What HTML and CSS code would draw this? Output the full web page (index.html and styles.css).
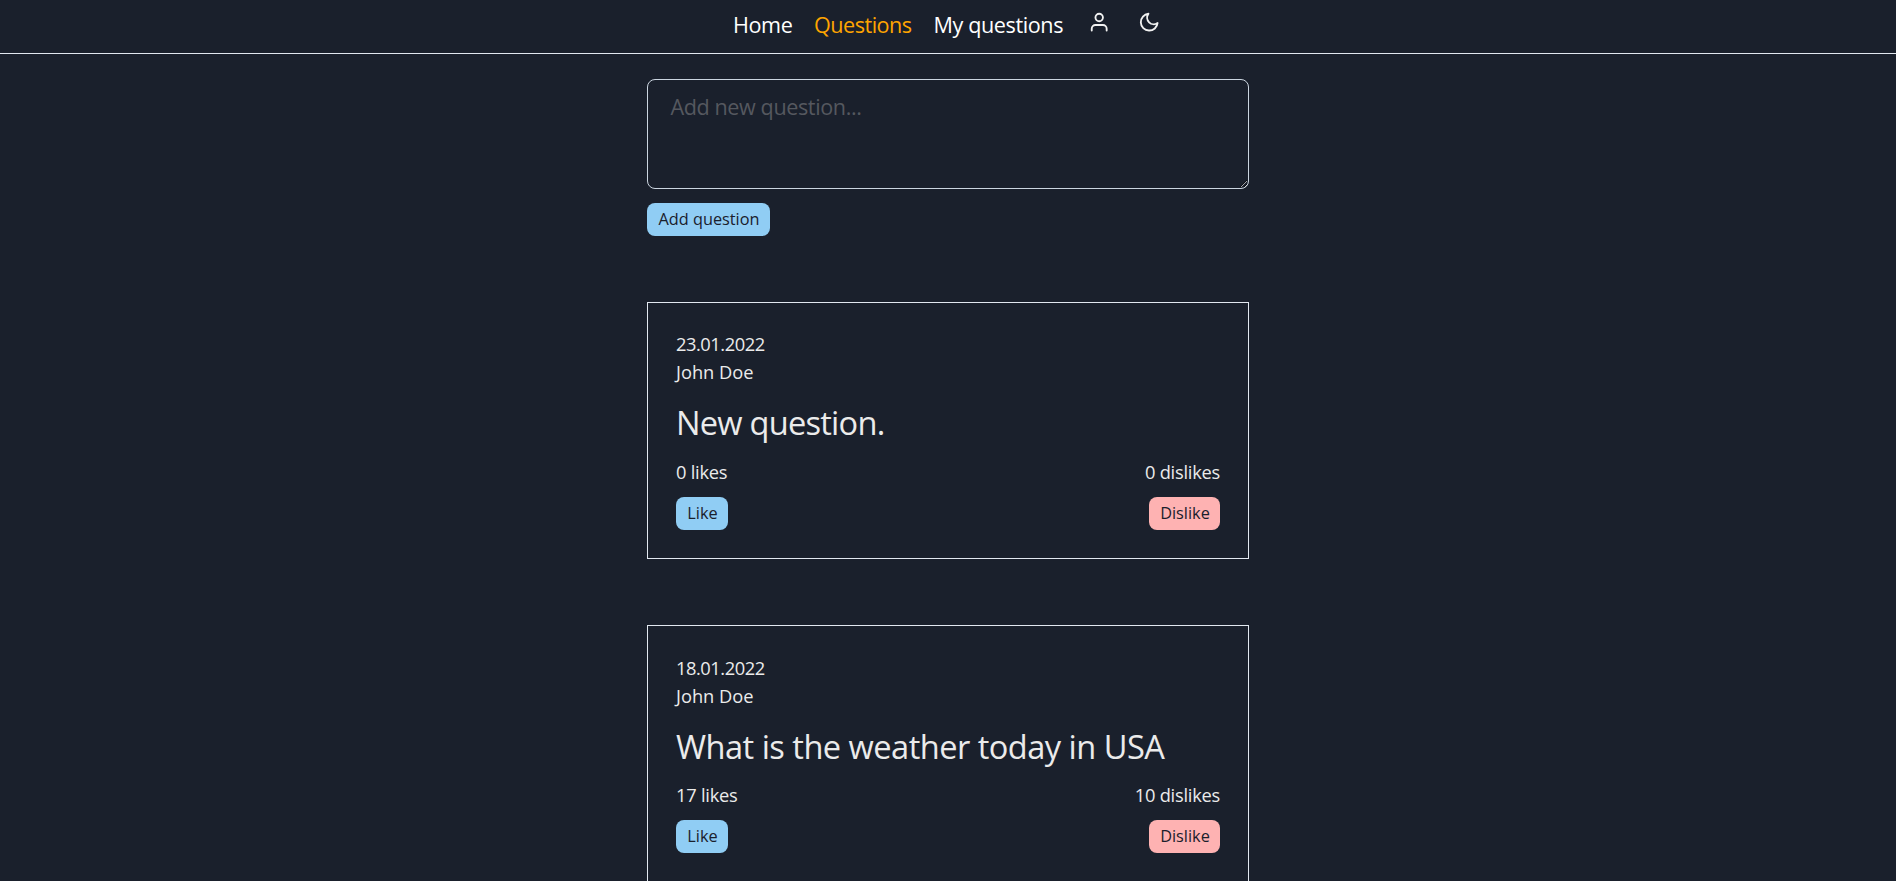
FILE: index.html
```html
<!DOCTYPE html>
<html lang="en">
<head>
<meta charset="utf-8">
<title>Questions</title>
<link rel="stylesheet" href="styles.css">
</head>
<body>
<header class="navbar">
  <nav class="nav">
    <a class="nav-link nav-home">Home</a>
    <a class="nav-link nav-questions active">Questions</a>
    <a class="nav-link nav-mine">My questions</a>
  </nav>
  <div class="nav-icons">
    <svg class="icon" viewBox="0 0 24 24"><path d="M20 21v-2a4 4 0 0 0-4-4H8a4 4 0 0 0-4 4v2"/><circle cx="12" cy="7" r="4"/></svg>
    <svg class="icon" viewBox="0 0 24 24"><path d="M21 12.79A9 9 0 1 1 11.21 3 7 7 0 0 0 21 12.79z"/></svg>
  </div>
</header>
<main class="content">
  <textarea class="question-input" placeholder="Add new question..."></textarea>
  <button class="btn btn-add">Add question</button>
  <article class="card">
    <p class="meta date">23.01.2022</p>
    <p class="meta">John Doe</p>
    <h2 class="title title-short">New question.</h2>
    <div class="votes">
      <div class="vote"><p class="meta count">0 likes</p><button class="btn btn-like">Like</button></div>
      <div class="vote vote-right"><p class="meta count">0 dislikes</p><button class="btn btn-dislike">Dislike</button></div>
    </div>
  </article>
  <article class="card card-lower">
    <p class="meta date">18.01.2022</p>
    <p class="meta">John Doe</p>
    <h2 class="title">What is the weather today in USA</h2>
    <div class="votes">
      <div class="vote"><p class="meta count">17 likes</p><button class="btn btn-like">Like</button></div>
      <div class="vote vote-right"><p class="meta count">10 dislikes</p><button class="btn btn-dislike">Dislike</button></div>
    </div>
  </article>
</main>
</body>
</html>
```
FILE: styles.css
```css
* { box-sizing: border-box; margin: 0; padding: 0; }

body {
  height: 881px;
  overflow: hidden;
  background: #1a202c;
  color: #ebebeb;
  font-family: "Open Sans", "Noto Sans", sans-serif;
}

.navbar {
  display: flex;
  height: 54px;
  padding: 8px 0 0 733px;
  border-bottom: 1px solid #e2e8f0;
}

.nav { display: flex; gap: 22px; }

.nav-link {
  color: #fff;
  font-size: 21.6px;
  line-height: 34px;
  letter-spacing: -0.4px;
  white-space: nowrap;
}
.nav-home { width: 59px; }
.nav-questions { width: 97.5px; letter-spacing: -0.5px; }
.nav-mine { width: 131.5px; }
.nav-link.active { color: #ffa500; }

.nav-icons { display: flex; gap: 28px; padding: 3px 0 0 23px; }

.icon {
  width: 22.4px;
  height: 22.4px;
  fill: none;
  stroke: #f2f2f2;
  stroke-width: 2;
  stroke-linecap: round;
  stroke-linejoin: round;
}

.content {
  display: flex;
  flex-direction: column;
  align-items: flex-start;
  width: 602px;
  margin: 25px auto 0;
}

.question-input {
  flex: none;
  width: 602px;
  height: 110px;
  padding: 10px 22.4px;
  border: 1px solid #cbd5e0;
  border-radius: 8px;
  background: transparent;
  color: #ebebeb;
  font: 21.6px/34px "Open Sans", "Noto Sans", sans-serif;
  letter-spacing: -0.4px;
  resize: vertical;
}
.question-input::placeholder { color: #55585f; opacity: 1; }

.btn {
  height: 33px;
  padding: 0 0 0 1px;
  border: 0;
  border-radius: 8px;
  color: #1a202c;
  font: 16.3px/33px "Open Sans", "Noto Sans", sans-serif;
  white-space: nowrap;
}
.btn-add { width: 123px; margin-top: 14px; background: #90cdf4; }
.btn-like { width: 52px; background: #90cdf4; }
.btn-dislike { width: 71px; background: #feb2b2; }

.card {
  flex: none;
  width: 602px;
  height: 257px;
  margin-top: 66px;
  padding: 27px 28px 28px;
  border: 1px solid #e2e8f0;
}

.meta { font-size: 18.3px; line-height: 28px; }
.date { letter-spacing: -0.45px; }
.count { letter-spacing: -0.25px; }

.title {
  margin: 12px 0 10px;
  font-size: 32.6px;
  font-weight: 400;
  line-height: 50px;
  letter-spacing: -0.52px;
  white-space: nowrap;
}
.title-short { letter-spacing: -0.75px; }

.card-lower { padding-top: 28px; }
.card-lower .title { margin-bottom: 9px; }

.votes { display: flex; justify-content: space-between; }
.vote { display: flex; flex-direction: column; align-items: flex-start; gap: 11px; }
.vote-right { align-items: flex-end; }
```
